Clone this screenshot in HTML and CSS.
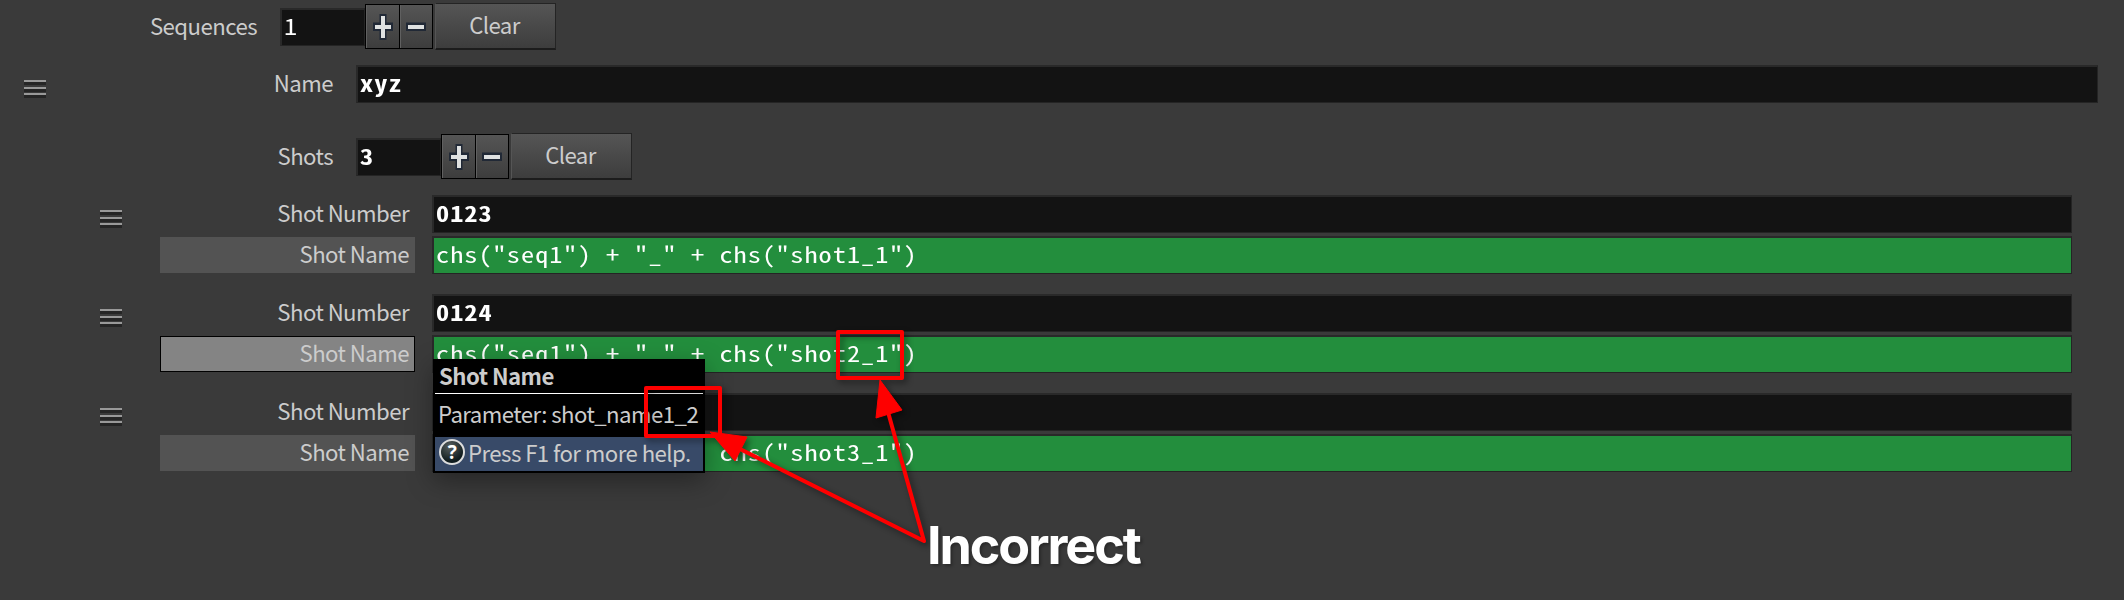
FILE: index.html
```html
<!DOCTYPE html>
<html lang="en">
<head>
<meta charset="utf-8">
<title>Sequence Parameters</title>
<link rel="stylesheet" href="styles.css">
</head>
<body>
<main class="panel">
  <div class="row count-row sequences">
    <span class="label">Sequences</span>
    <div class="field small light"><span>1</span></div>
    <div class="spinner">
      <span class="step"><svg width="20" height="26" viewBox="0 0 20 26"><path d="M6.500 0h7v8.500h6.500v8.500h-6.500v9h-7v-9H0v-8.500h6.500z" fill="#212936"/><path d="M8 2h4v9h6v4h-6v9H8v-9H2v-4h6z" fill="#dfe1e1"/></svg></span>
      <span class="step"><svg width="20" height="26" viewBox="0 0 20 26"><path d="M0 8.500h20v8.500H0z" fill="#212936"/><path d="M2 11h16v4H2z" fill="#dfe1e1"/></svg></span>
    </div>
    <div class="button">Clear</div>
  </div>
  <div class="row name-row">
    <span class="handle"><i></i><i></i><i></i></span>
    <span class="label">Name</span>
    <div class="field"><span>xyz</span></div>
  </div>
  <div class="row count-row shots">
    <span class="label">Shots</span>
    <div class="field small"><span>3</span></div>
    <div class="spinner">
      <span class="step"><svg width="20" height="26" viewBox="0 0 20 26"><path d="M6.500 0h7v8.500h6.500v8.500h-6.500v9h-7v-9H0v-8.500h6.500z" fill="#212936"/><path d="M8 2h4v9h6v4h-6v9H8v-9H2v-4h6z" fill="#dfe1e1"/></svg></span>
      <span class="step"><svg width="20" height="26" viewBox="0 0 20 26"><path d="M0 8.500h20v8.500H0z" fill="#212936"/><path d="M2 11h16v4H2z" fill="#dfe1e1"/></svg></span>
    </div>
    <div class="button">Clear</div>
  </div>
  <section class="shot">
    <span class="handle"><i></i><i></i><i></i></span>
    <div class="params">
      <span class="label">Shot Number</span><div class="field"><span>0123</span></div>
      <span class="label tag">Shot Name</span><div class="field expr"><span>chs("seq1") + "_" + chs("shot1_1")</span></div>
    </div>
  </section>
  <section class="shot">
    <span class="handle"><i></i><i></i><i></i></span>
    <div class="params">
      <span class="label">Shot Number</span><div class="field"><span>0124</span></div>
      <span class="label tag hover">Shot Name</span><div class="field expr"><span>chs("seq1") + "_" + chs("shot2_1")</span></div>
    </div>
  </section>
  <section class="shot">
    <span class="handle"><i></i><i></i><i></i></span>
    <div class="params">
      <span class="label">Shot Number</span><div class="field"></div>
      <span class="label tag">Shot Name</span><div class="field expr"><span>chs("seq1") + "_" + chs("shot3_1")</span></div>
    </div>
  </section>
</main>
<aside class="tooltip">
  <div class="tip-title">Shot Name</div>
  <div class="tip-param">Parameter: shot_name1_2</div>
  <div class="tip-help"><span class="help-icon">?</span><span>Press F1 for more help.</span></div>
</aside>
<svg class="marks" width="2124" height="600" viewBox="0 0 2124 600">
  <g fill="none" stroke="#fe0000" stroke-width="4" stroke-linejoin="round" stroke-linecap="round">
    <rect x="646" y="388" width="74" height="48"/>
    <rect x="838" y="332" width="64" height="46"/>
    <path d="M738 448L924 541L888 412"/>
  </g>
  <path d="M710 432l37 5-12 24zM880 380l22 30-26 8z" fill="#fe0000" stroke="#fe0000" stroke-linejoin="round"/>
</svg>
<div class="note">Incorrect</div>
</body>
</html>
```
FILE: styles.css
```css
* { box-sizing: border-box; }
body {
  margin: 0;
  width: 2124px;
  height: 600px;
  overflow: hidden;
  position: relative;
  background: #3a3a3a;
  color: #cccccc;
  font-family: "Noto Sans CJK SC", "Noto Sans", sans-serif;
  font-size: 22.2px;
  letter-spacing: -0.55px;
}
.panel { display: flex; flex-direction: column; padding-top: 3px; }
.row { display: flex; align-items: center; }
.label { text-align: right; white-space: nowrap; line-height: 32px; padding-bottom: 4px; }
.count-row { height: 47px; }
.sequences .label { width: 257px; margin-right: 23px; }
.shots { margin-top: 30px; }
.shots .label { width: 333px; margin-right: 23px; }
.name-row { height: 38px; margin-top: 15px; padding: 0 26px 0 24px; }
.name-row .label { width: 287px; margin-right: 23px; }
.name-row .field { flex: 1; }
.handle { width: 22px; height: 18px; display: flex; flex-direction: column; gap: 2px; }
.name-row .handle { margin-top: 10px; }
.handle i { display: block; flex: none; height: 5px; background: #999; border-bottom: 3px solid #252525; }
.handle i:last-child { margin-top: -1px; }
.field {
  height: 38px;
  padding-left: 2px;
  background: #131313;
  border: 1px solid #242424;
  border-top: 2px solid #292929;
  border-left: 2px solid #292929;
  color: #fff;
  font: bold 22.3px/30px "Noto Sans Mono CJK SC", "DejaVu Sans Mono", monospace;
  white-space: pre;
}
.field span {
  display: inline-block;
  transform: scaleX(1.18);
  transform-origin: 0 0;
  letter-spacing: 0.86px;
}
.small { width: 85px; }
.light { font-weight: 400; }
.expr { background: #238e3d; font-weight: 400; }
.spinner { display: flex; width: 68px; height: 45px; border: 1px solid #000; background: #000; gap: 1px; }
.step { flex: 1; display: flex; align-items: center; justify-content: center; background: linear-gradient(#555, #3d3d3d); border-left: 1px solid #606060; }
.button {
  width: 121px;
  height: 47px;
  margin-left: 2px;
  padding-right: 2px;
  text-align: center;
  line-height: 41px;
  background: linear-gradient(#555, #3d3d3d);
  border: 1px solid #242424;
  border-left-color: #555;
  border-bottom: 2px solid #1c1c1c;
}
.shot { display: flex; height: 79px; margin: 0 52px 20px 100px; }
.row + .shot { margin-top: 15px; }
.shot .handle { margin: 15px 38px 0 0; }
.params { flex: 1; display: grid; grid-template-columns: 255px 1fr; grid-auto-rows: 38px; gap: 3px 17px; align-items: center; }
.params .label { height: 36px; padding-right: 6px; }
.tag { background: #535353; }
.hover { background: #848484; border: 1px solid #000; line-height: 30px; }
.params .hover { padding-right: 5px; }
.tooltip {
  position: absolute;
  left: 433px;
  top: 359px;
  width: 272px;
  height: 114px;
  padding: 0 2px;
  background: #000;
  box-shadow: 0 8px 24px rgba(0, 0, 0, .35);
  white-space: nowrap;
}
.tip-title { height: 35px; padding-left: 4px; border-bottom: 1px solid #fff; font-weight: 700; line-height: 33px; }
.tip-param { height: 43px; padding-left: 3px; line-height: 39px; }
.tip-help { display: flex; align-items: center; height: 34px; padding-left: 4px; gap: 3px; background: #384a68; line-height: 32px; }
.tip-help span:last-child { padding-bottom: 4px; }
.help-icon {
  flex: none;
  width: 26px;
  height: 26px;
  margin-top: -4px;
  border: 2px solid #ddd;
  border-radius: 50%;
  background: radial-gradient(circle at 40% 25%, #59605f, #101c1e 70%);
  color: #fff;
  font: bold 19px/22px "Open Sans", sans-serif;
  text-align: center;
}
.marks { position: absolute; left: 0; top: 0; filter: drop-shadow(3px 3px 3px rgba(0, 0, 0, .45)); }
.note {
  position: absolute;
  left: 927px;
  top: 516px;
  color: #fff;
  font: bold 52px/60px Inter, sans-serif;
  letter-spacing: -2.1px;
  text-shadow: 2px 2px 3px rgba(0, 0, 0, .3);
}
```
